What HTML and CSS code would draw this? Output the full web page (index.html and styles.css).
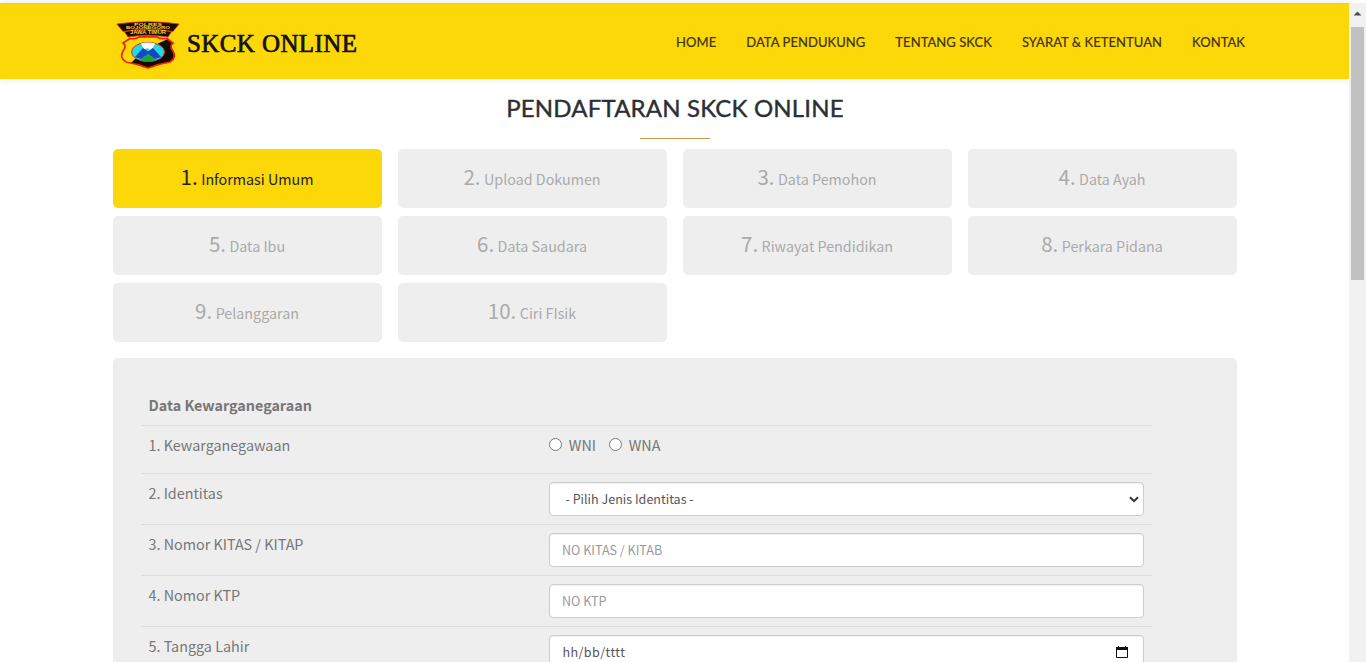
FILE: index.html
```html
<!DOCTYPE html>
<html lang="id">
<head>
<meta charset="utf-8">
<title>SKCK Online</title>
<link rel="stylesheet" href="styles.css">
</head>
<body>
<div class="viewport">
  <div class="page">
    <header class="header">
      <a class="brand">
        <svg class="crest" viewBox="0 0 64 48" width="64" height="48">
          <defs><clipPath id="shield"><path d="M14 17.500Q20 18.500 23 15.800H41Q44 18.500 51 17.500L57 22Q53 25 57 30Q61 37 54 41Q42 43 32 47Q22 43 10 41Q3 37 7 30Q11 25 7 22Z"/></clipPath></defs>
          <path d="M.8 3Q32-1.500 63.200 3L57 10.500Q32 6 7 10.500Z" fill="#170800" stroke="#f02a12" stroke-width=".8"/>
          <path d="M8.500 10.700Q32 6.500 55.500 10.700L52 16Q32 12.500 12 16Z" fill="#170800" stroke="#f02a12" stroke-width=".8"/>
          <g clip-path="url(#shield)"><path fill="#fdd808" d="M0 12h64v36H0z"/><path d="M54 17L43 22L20 37L13 44L24 48H64V17Z" fill="#140800"/></g>
          <path d="M14 17.500Q20 18.500 23 15.800H41Q44 18.500 51 17.500L57 22Q53 25 57 30Q61 37 54 41Q42 43 32 47Q22 43 10 41Q3 37 7 30Q11 25 7 22Z" fill="none" stroke="#f5200c" stroke-width="1.700"/>
          <ellipse cx="32" cy="31" rx="16.500" ry="9.600" fill="#24d8e8" stroke="#e83018"/>
          <path d="M25 22.500Q32 20.500 39 22.500L37 26.500L34 29L31.500 27L28 28.500Z" fill="#fff"/>
          <path d="M19 36L27 27L32 30.500L37 27L45 36L39 38L32 33L25 38Z" fill="#1746be"/>
          <path d="M24 39L32 33L40 39Q32 41.500 24 39Z" fill="#18a735"/>
          <text class="crest-text" x="32" y="4.600" textLength="28" lengthAdjust="spacingAndGlyphs">POLRES</text>
          <text class="crest-text" x="32" y="8" textLength="44" lengthAdjust="spacingAndGlyphs">BOJONEGORO</text>
          <text class="crest-text crest-region" x="32" y="13.300" textLength="36" lengthAdjust="spacingAndGlyphs">JAWA TIMUR</text>
        </svg>
        <span class="brand-name">SKCK ONLINE</span>
      </a>
      <nav class="nav">
        <a>HOME</a><a>DATA PENDUKUNG</a><a>TENTANG SKCK</a><a>SYARAT &amp; KETENTUAN</a><a>KONTAK</a>
      </nav>
    </header>
    <main class="container">
      <h1 class="title">PENDAFTARAN SKCK ONLINE</h1>
      <div class="rule"></div>
      <div class="steps">
        <a class="step current"><b>1.</b> Informasi Umum</a>
        <a class="step"><b>2.</b> Upload Dokumen</a>
        <a class="step"><b>3.</b> Data Pemohon</a>
        <a class="step"><b>4.</b> Data Ayah</a>
        <a class="step"><b>5.</b> Data Ibu</a>
        <a class="step"><b>6.</b> Data Saudara</a>
        <a class="step"><b>7.</b> Riwayat Pendidikan</a>
        <a class="step"><b>8.</b> Perkara Pidana</a>
        <a class="step"><b>9.</b> Pelanggaran</a>
        <a class="step"><b>10.</b> Ciri FIsik</a>
      </div>
      <form class="panel">
        <div class="row head">Data Kewarganegaraan</div>
        <div class="row radios"><span class="label">1. Kewarganegawaan</span>
          <div class="options"><label><input type="radio" name="wn">WNI</label><label><input type="radio" name="wn">WNA</label></div></div>
        <div class="row"><span class="label">2. Identitas</span>
          <div class="control select"><span>- Pilih Jenis Identitas -</span><svg width="10" height="7" viewBox="0 0 10 7"><path d="M1 1.200L5 5.200L9 1.200" fill="none" stroke="#333" stroke-width="2"/></svg></div></div>
        <div class="row"><span class="label">3. Nomor KITAS / KITAP</span><input class="control" placeholder="NO KITAS / KITAB"></div>
        <div class="row"><span class="label">4. Nomor KTP</span><input class="control" placeholder="NO KTP"></div>
        <div class="row"><span class="label">5. Tangga Lahir</span>
          <div class="control date"><span class="date-text">hh/bb/tttt</span><svg width="12" height="13" viewBox="0 0 12 13"><path d="M.5 1.500H11.500V11.500H.5Z" fill="none" stroke="#111"/><path d="M0 1H2V0H3V1H9V0H10V1H12V4H0Z" fill="#111"/></svg></div></div>
      </form>
    </main>
  </div>
  <div class="scrollbar"><svg width="16" height="23" viewBox="0 0 16 23"><path d="M2.500 11.500L6.500 7.500L10.500 11.500Z" fill="#505050"/></svg><div class="thumb"></div></div>
</div>
</body>
</html>
```
FILE: styles.css
```css
* { box-sizing: border-box; }
body { margin: 0; overflow: hidden; background: #fff; font-family: "Noto Sans CJK SC", sans-serif; }
.viewport { display: flex; height: 662px; padding-top: 3px; overflow: hidden; }
.page { width: 1349px; flex: none; }
.header { height: 76px; padding: 0 104px 0 116px; display: flex; justify-content: space-between; align-items: flex-start; background: #fdd808; border-top: 1px solid #cfc6a0; box-shadow: 0 0 10px rgba(0,0,0,.09); }
.brand { display: flex; gap: 7px; padding-top: 17px; }
.crest-text { font: bold 3.800px "Liberation Sans", sans-serif; fill: #f5cf35; text-anchor: middle; }
.crest-region { font-size: 4.600px; }
.brand-name { font: 25px/45px "Liberation Serif", serif; letter-spacing: .4px; color: #111; -webkit-text-stroke: .7px #111; white-space: nowrap; }
.nav { display: flex; gap: 30px; padding-top: 28px; font: 400 13px/20px Lato, sans-serif; letter-spacing: .06px; color: #3e320c; white-space: nowrap; }
.nav a { -webkit-text-stroke: .2px #3e320c; }
.container { width: 1140px; margin-left: 105px; padding: 0 8px; }
.title { margin: 0; padding-top: 13px; height: 59px; font: 400 24px/32px Lato, sans-serif; letter-spacing: .18px; color: #2c2f33; text-align: center; white-space: nowrap; -webkit-text-stroke: .4px #2c2f33; }
.rule { width: 70px; height: 1px; margin: 0 auto; background: #cf954c; }
.steps { display: grid; grid-template-columns: repeat(4, 269px); gap: 8px 16px; margin-top: 10px; }
.step { height: 59px; border-radius: 5px; background: #eee; color: #aaa; display: flex; justify-content: center; align-items: baseline; gap: 3.500px; padding-right: 1px; font-size: 14.300px; line-height: 54px; white-space: nowrap; }
.step b { font-size: 20.500px; font-weight: 400; }
.current { background: #fdd808; color: #222; }
.panel { margin-top: 16px; height: 400px; padding: 28px; border-radius: 5px; background: #eee; }
.row { width: 1011px; height: 51px; padding: 8px 7.500px; display: flex; border-top: 1px solid #ddd; font-size: 14.350px; line-height: 22px; color: #777; white-space: nowrap; }
.head { height: 39px; border: 0; font-weight: 700; }
.radios { height: 48px; }
.label { width: 400.500px; flex: none; }
.options { display: flex; gap: 13px; }
.options label { display: flex; }
.options input { width: 13px; height: 13px; margin: 4px 6.800px 0 0; }
.control { width: 595px; height: 34px; padding: 0 12px 1px; border: 1px solid #ccc; border-radius: 4px; background: #fff; font: 12.550px/32px "Noto Sans CJK SC", sans-serif; color: #555; box-shadow: inset 0 1px 1px rgba(0,0,0,.06); outline: none; }
.control::placeholder { color: #999; opacity: 1; }
.select { display: flex; align-items: center; justify-content: space-between; padding: 0 4px 0 15.500px; }
.date { display: flex; align-items: center; justify-content: space-between; padding: 0 15px 0 12.500px; }
.date-text { letter-spacing: .4px; }
.scrollbar { width: 17px; height: 659px; padding: 1px 2px 0; background: #f1f1f1; display: flex; flex-direction: column; }
.scrollbar svg { display: block; flex: none; }
.thumb { width: 13px; height: 253px; background: #c1c1c1; }
```
